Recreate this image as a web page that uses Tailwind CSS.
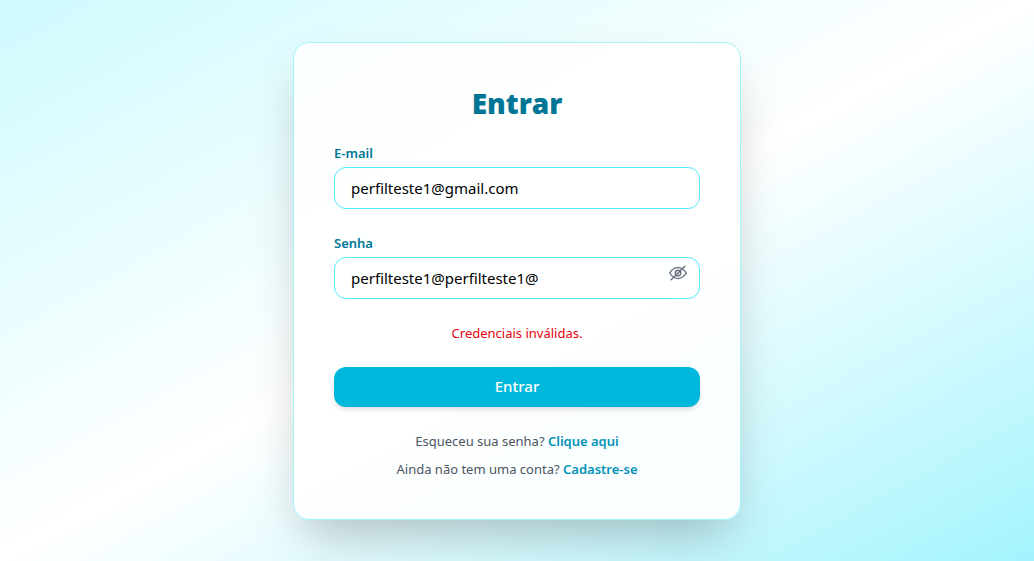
<!DOCTYPE html>
<html lang="pt-BR">
<head>
<meta charset="utf-8">
<meta name="viewport" content="width=device-width, initial-scale=1">
<title>Entrar</title>
<script src="https://cdn.jsdelivr.net/npm/@tailwindcss/browser@4"></script>
</head>
<body class="font-['Noto_Sans','Open_Sans',sans-serif]">
<main class="flex min-h-screen items-center justify-center bg-gradient-to-br from-cyan-100 via-white to-cyan-200 px-4">
  <div class="w-full max-w-md rounded-2xl border border-cyan-200 bg-white/90 p-10 shadow-2xl">
    <h1 class="mb-5 text-center font-['Open_Sans',sans-serif] text-[28px] leading-10 font-extrabold text-cyan-700">Entrar</h1>
    <form class="flex flex-col gap-6">
      <div>
        <label for="email" class="mb-1 block text-[13px] leading-5 font-semibold text-cyan-700">E-mail</label>
        <input id="email" type="email" value="perfilteste1@gmail.com" class="block w-full rounded-xl border border-cyan-300 px-4 py-2 text-[15px] leading-6 text-black">
      </div>
      <div>
        <label for="senha" class="mb-1 block text-[13px] leading-5 font-semibold text-cyan-700">Senha</label>
        <div class="relative">
          <input id="senha" type="text" value="perfilteste1@perfilteste1@" class="block w-full rounded-xl border border-cyan-300 py-2 pr-12 pl-4 text-[15px] leading-6 text-black">
          <button type="button" aria-label="Ocultar senha" class="absolute top-1.5 right-3 text-gray-500">
            <svg class="size-5" viewBox="0 0 20 20" fill="none" stroke="currentColor" stroke-width="1.5" stroke-linecap="round" stroke-linejoin="round"><path d="M1.8 10S4.8 4.5 10 4.500 18.200 10 18.200 10 15.200 15.500 10 15.500 1.800 10 1.800 10Z"/><circle cx="10" cy="10" r="2.700"/><path d="M3.200 16.800 16.800 3.200"/></svg>
          </button>
        </div>
      </div>
      <p class="text-center text-[13px] leading-5 text-red-600">Credenciais inválidas.</p>
      <button type="submit" class="h-10 w-full rounded-xl bg-[#00b8db] text-[15px] font-medium text-white shadow-md">Entrar</button>
    </form>
    <div class="mt-6 space-y-2 text-center text-[13px] leading-5 text-gray-600">
      <p>Esqueceu sua senha? <a href="#" class="font-semibold text-cyan-600">Clique aqui</a></p>
      <p>Ainda não tem uma conta? <a href="#" class="font-semibold text-cyan-600">Cadastre-se</a></p>
    </div>
  </div>
</main>
</body>
</html>
